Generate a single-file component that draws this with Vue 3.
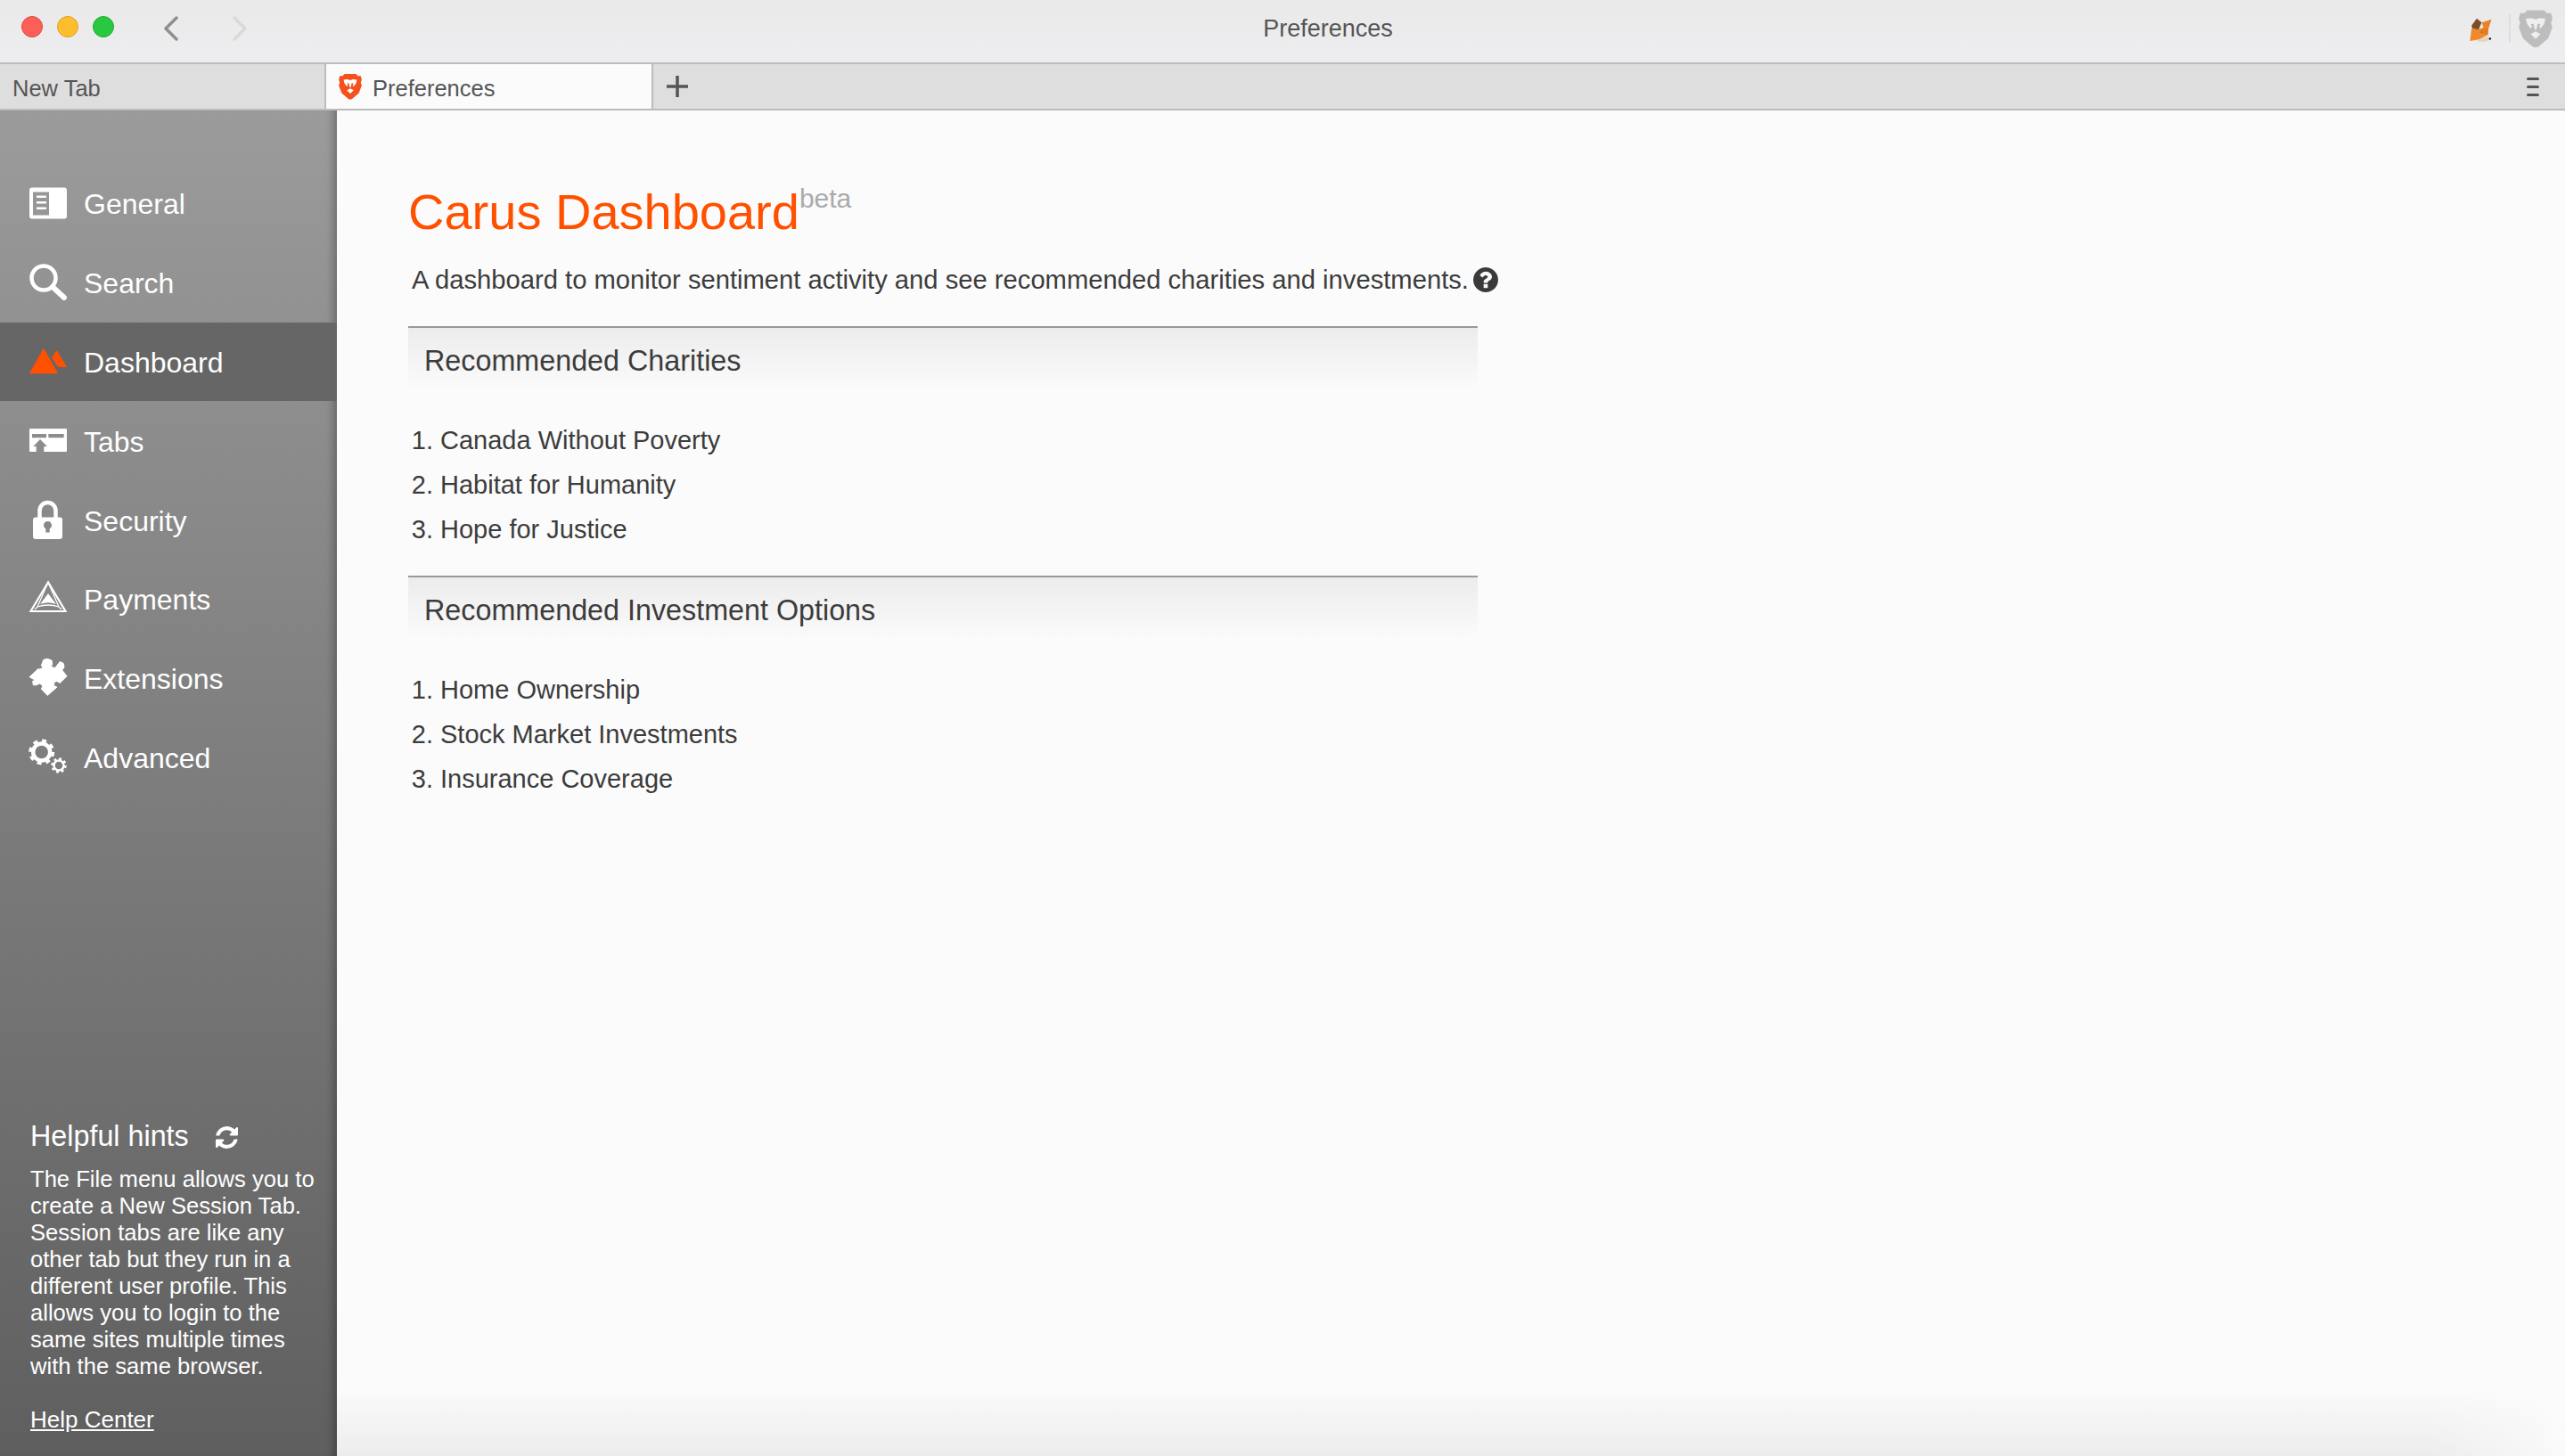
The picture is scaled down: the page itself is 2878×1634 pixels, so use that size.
<script setup>
const charities = ['Canada Without Poverty', 'Habitat for Humanity', 'Hope for Justice']
const investments = ['Home Ownership', 'Stock Market Investments', 'Insurance Coverage']
const shield = 'M6 1 L18 1 L20 3 L23 3 L24 7 L23 10 L24 13 L21 21 L14 27 Q12 28 10 27 L3 21 L0 13 L1 10 L0 7 L1 3 L4 3 Z'
const mane = 'M5 7 L9 6.5 L12 7.5 L15 6.5 L19 7 L18 11 L15.5 14 L14.5 12.5 L15.5 11 L13.5 10.5 L12.5 15 L11.5 15 L10.5 10.5 L8.5 11 L9.5 12.5 L8.5 14 L6 11 Z'
const chin = 'M12 16 L15.5 18 L12 21.5 L8.5 18 Z'
</script>

<template>
  <div class="window">
    <header class="titlebar">
      <div class="controls">
        <span class="light red"></span>
        <span class="light amber"></span>
        <span class="light green"></span>
        <svg class="chev back" viewBox="0 0 16 28"><path d="M14 2 L2 14 L14 26" /></svg>
        <svg class="chev forward" viewBox="0 0 16 28"><path d="M2 2 L14 14 L2 26" /></svg>
      </div>
      <div class="wintitle">Preferences</div>
      <div class="extras">
        <svg class="fox" viewBox="0 0 70 78">
          <polygon points="38,15 70,5 60,35 45,35" fill="#e8832a" />
          <polygon points="5,35 28,38 45,32 60,35 58,55 45,62 30,70 0,75" fill="#f0892c" />
          <polygon points="28,38 45,32 60,35 58,55 42,52" fill="#e57d1f" />
          <polygon points="5,25 22,2 38,15 28,38 8,35" fill="#7f4d25" />
          <polygon points="30,70 58,60 70,68 50,78 20,76" fill="#e4d3c2" />
          <circle cx="65" cy="68" r="3.5" fill="#222" />
          <circle cx="38" cy="47" r="2" fill="#555" />
        </svg>
        <span class="extra-sep"></span>
        <svg class="brave-gray" viewBox="0 0 24 28">
          <path :d="shield" fill="#bdbdbd" />
          <path :d="mane" fill="#efefef" />
          <path :d="chin" fill="#efefef" />
        </svg>
      </div>
    </header>

    <nav class="tabstrip">
      <div class="tab">New Tab</div>
      <div class="tab active">
        <svg class="favicon" viewBox="0 0 24 28">
          <path :d="shield" fill="#f4511e" />
          <path :d="mane" fill="#fff" />
          <path :d="chin" fill="#fff" />
        </svg>
        <span>Preferences</span>
      </div>
      <svg class="plus" viewBox="0 0 24 24"><path d="M12 0 V24 M0 12 H24" /></svg>
      <div class="burger"><i></i><i></i><i></i></div>
    </nav>

    <div class="body">
      <aside class="sidebar">
        <ul class="nav">
          <li class="nav-item">
            <svg viewBox="0 0 44 44"><path fill="#fff" fill-rule="evenodd" d="M4 4.500 H40 a3 3 0 0 1 3 3 V36.500 a3 3 0 0 1 -3 3 H4 a3 3 0 0 1 -3 -3 V7.500 a3 3 0 0 1 3 -3 Z M5 9.500 V35.500 H23 V9.500 Z M9 13.500 H20 V16 H9 Z M9 20 H20 V22.500 H9 Z M9 26.500 H20 V29 H9 Z" /></svg>
            <span>General</span>
          </li>
          <li class="nav-item">
            <svg viewBox="0 0 44 44"><circle cx="17" cy="17" r="13.500" fill="none" stroke="#fff" stroke-width="4.500" /><path d="M27 27 L40 39" stroke="#fff" stroke-width="6" stroke-linecap="round" /></svg>
            <span>Search</span>
          </li>
          <li class="nav-item current">
            <svg viewBox="0 0 44 44"><path fill="#ff5000" stroke="#ff5000" stroke-width="1.500" stroke-linejoin="round" d="M17 8 L2 34.500 H32 Z" /><path fill="#ff5000" stroke="#ff5000" stroke-width="1" stroke-linejoin="round" d="M31.500 9.500 L42.500 27.500 H33.500 L26.500 17.500 Z" /></svg>
            <span>Dashboard</span>
          </li>
          <li class="nav-item">
            <svg viewBox="0 0 44 44"><path fill="#fff" fill-rule="evenodd" d="M2 8 H42 a1 1 0 0 1 1 1 V33 a1 1 0 0 1 -1 1 H17.300 V28 H21 L13 20 L5.300 28 H8.700 V34 H2 a1 1 0 0 1 -1 -1 V9 a1 1 0 0 1 1 -1 Z M4 14 V18.200 H20 V14 Z M22.300 14 V18.200 H39.700 V14 Z" /></svg>
            <span>Tabs</span>
          </li>
          <li class="nav-item">
            <svg viewBox="0 0 44 44"><path d="M12.500 20 V11 a9 9 0 0 1 18 0 V20" fill="none" stroke="#fff" stroke-width="4.500" /><path fill="#fff" fill-rule="evenodd" d="M8 18.400 H35 a3 3 0 0 1 3 3 V40 a3 3 0 0 1 -3 3 H8 a3 3 0 0 1 -3 -3 V21.400 a3 3 0 0 1 3 -3 Z M21.500 23 a4.500 4.500 0 0 0 -2.200 8.400 V35.500 H23.700 V31.400 A4.500 4.500 0 0 0 21.500 23 Z" /></svg>
            <span>Security</span>
          </li>
          <li class="nav-item">
            <svg viewBox="0 0 44 44"><path d="M22 3.500 L2.500 36 H41.500 Z" fill="none" stroke="#fff" stroke-width="2.200" /><path d="M22 3.500 L10 31 M22 3.500 L34 31 M7 34 L10 31 Q22 27 34 31 L37 34" fill="none" stroke="#fff" stroke-width="1.300" /><path fill="#fff" d="M22 16 L31 28 Q22 24.500 13 28 Z" /></svg>
            <span>Payments</span>
          </li>
          <li class="nav-item">
            <svg viewBox="0 0 44 44"><polygon fill="#fff" stroke="#fff" stroke-width="1" stroke-linejoin="round" points="15.300,5.500 16.700,1.500 21,0.300 26,2.100 26.700,6.500 25.300,8.800 29.300,10.800 31.700,8.100 35.300,3.500 39.300,5.500 40,9.800 37.700,13.100 43,19.800 35.300,27.500 32,25.500 28.700,26.500 28.700,30.800 32,32.100 21.300,41.500 14.300,34.100 16,30.800 12.700,28.100 8.700,29.800 5.300,29.800 4.700,25.500 7.300,24.100 1,20.800 11,11.500 12.700,12.100 16,10.500 14.300,7.500" /></svg>
            <span>Extensions</span>
          </li>
          <li class="nav-item">
            <svg viewBox="0 0 44 44">
              <g fill="none" stroke="#fff">
                <circle cx="14.700" cy="16" r="9.500" stroke-width="4.500" />
                <circle cx="14.700" cy="16" r="12.500" stroke-width="4" stroke-dasharray="4.910 4.910" />
                <circle cx="34" cy="31" r="5.500" stroke-width="2.500" />
                <circle cx="34" cy="31" r="7.400" stroke-width="2.600" stroke-dasharray="2.900 2.900" />
              </g>
            </svg>
            <span>Advanced</span>
          </li>
        </ul>

        <section class="hints">
          <h3 class="hints-title">
            <span>Helpful hints</span>
            <svg class="refresh" viewBox="128 128 1536 1536"><path fill="#fff" d="M1639 1056q0 5-1 7-64 268-268 434.500t-478 166.500q-146 0-282.500-55t-243.500-157l-129 129q-19 19-45 19t-45-19-19-45v-448q0-26 19-45t45-19h448q26 0 45 19t19 45-19 45l-137 137q71 66 161 102t187 36q134 0 250-65t186-179q11-17 53-117 8-23 30-23h192q13 0 22.500 9.500t9.500 22.500zm25-800v448q0 26-19 45t-45 19h-448q-26 0-45-19t-19-45 19-45l138-138q-148-137-349-137-134 0-250 65t-186 179q-11 17-53 117-8 23-30 23h-199q-13 0-22.500-9.500t-9.500-22.500v-7q65-268 270-434.500t480-166.500q146 0 284 55.500t245 156.500l130-129q19-19 45-19t45 19 19 45z" /></svg>
          </h3>
          <p class="hints-text">The File menu allows you to create a New Session Tab. Session tabs are like any other tab but they run in a different user profile. This allows you to login to the same sites multiple times with the same browser.</p>
          <a class="help-link">Help Center</a>
        </section>
      </aside>

      <main class="content">
        <h1 class="page-title">Carus Dashboard<sup>beta</sup></h1>
        <p class="desc">
          <span>A dashboard to monitor sentiment activity and see recommended charities and investments.</span>
          <svg class="info" viewBox="128 128 1536 1536"><path fill="#3a3a3a" d="M1024 1376v-192q0-14-9-23t-23-9h-192q-14 0-23 9t-9 23v192q0 14 9 23t23 9h192q14 0 23-9t9-23zm256-672q0-88-55.500-163t-138.500-116-170-41q-243 0-371 213-15 24 8 42l132 100q7 6 19 6 16 0 25-12 53-68 86-92 34-24 86-24 48 0 85.500 26t37.500 59q0 38-20 61t-68 45q-63 28-115.500 86.500t-52.500 125.500v36q0 14 9 23t23 9h192q14 0 23-9t9-23q0-19 21.500-49.500t54.500-49.500q32-18 49-28.500t46-35 44.500-48 28-60.500 12.500-81zm384 192q0 209-103 385.500t-279.500 279.500-385.500 103-385.500-103-279.500-279.500-103-385.500 103-385.500 279.500-279.500 385.500-103 385.500 103 279.500 279.500 103 385.500z" /></svg>
        </p>

        <section class="block">
          <h2 class="block-head">Recommended Charities</h2>
          <ol class="rank">
            <li v-for="c in charities" :key="c">{{ c }}</li>
          </ol>
        </section>
        <section class="block">
          <h2 class="block-head">Recommended Investment Options</h2>
          <ol class="rank">
            <li v-for="c in investments" :key="c">{{ c }}</li>
          </ol>
        </section>
        <div class="bottom-fade"></div>
      </main>
    </div>
  </div>
</template>

<style scoped>
.window {
  height: 100vh;
  display: flex;
  flex-direction: column;
  overflow: hidden;
  font-family: "Liberation Sans", Arial, sans-serif;
  color: #3c3c3c;
}

.titlebar {
  height: 64px;
  padding-bottom: 6px;
  flex: none;
  display: flex;
  align-items: center;
  border-bottom: 2px solid #bcbcbc;
  box-sizing: content-box;
  background: linear-gradient(#e9e9ea, #eeeef0);
}
.controls {
  width: 300px;
  flex: none;
  display: flex;
  align-items: center;
  padding-left: 24px;
  box-sizing: border-box;
}
.light {
  width: 24px;
  height: 24px;
  border-radius: 50%;
  margin-right: 16px;
  margin-top: -4px;
  box-sizing: border-box;
}
.red { background: #fc5f57; border: 1px solid #e2463f; }
.amber { background: #fdbd2e; border: 1px solid #e1a123; }
.green { background: #28c840; border: 1px solid #1fad2e; }
.chev {
  width: 16px;
  height: 28px;
  fill: none;
  stroke-width: 3.500;
  stroke-linecap: round;
  stroke-linejoin: round;
}
.back { stroke: #8f8f8f; margin-left: 40px; }
.forward { stroke: #d9d9d9; margin-left: 61px; }
.wintitle {
  flex: 1;
  text-align: center;
  font-size: 27px;
  color: #555;
}
.extras {
  width: 198px;
  flex: none;
  display: flex;
  align-items: center;
  box-sizing: border-box;
}
.fox { width: 25px; height: 27px; margin-left: 91px; margin-top: 3px; }
.extra-sep { width: 2px; height: 32px; background: #dedede; margin-left: 19px; }
.brave-gray { width: 38px; height: 44px; margin-left: 9px; }

.tabstrip {
  height: 50px;
  flex: none;
  display: flex;
  align-items: center;
  background: #dedede;
  border-bottom: 2px solid #bcbcbc;
  box-sizing: content-box;
}
.tab {
  width: 366px;
  height: 100%;
  display: flex;
  align-items: center;
  padding-left: 14px;
  padding-top: 4px;
  box-sizing: border-box;
  font-size: 25.500px;
  color: #555;
  border-right: 2px solid #bcbcbc;
}
.tab.active {
  width: 367px;
  background: #fbfbfb;
  padding-left: 14px;
  padding-top: 0;
}
.tab.active span {
  padding-top: 4px;
}
.favicon { width: 26px; height: 30px; margin-right: 12px; }
.plus {
  width: 24px;
  height: 24px;
  margin-left: 15px;
  stroke: #555;
  stroke-width: 3.500;
  fill: none;
}
.burger {
  margin-left: auto;
  margin-right: 29px;
  display: flex;
  flex-direction: column;
  gap: 6px;
}
.burger i {
  display: block;
  width: 14px;
  height: 3px;
  background: #555;
  border-radius: 2px;
}

.body {
  flex: 1;
  min-height: 0;
  display: flex;
}
.sidebar {
  width: 378px;
  flex: none;
  display: flex;
  flex-direction: column;
  background: linear-gradient(#9b9b9b, #5f5f5f);
  box-shadow: inset -10px 0 10px -6px rgba(0, 0, 0, 0.28);
  position: relative;
  color: #fff;
}
.nav {
  list-style: none;
  margin: 0;
  padding: 60px 0 0;
}
.nav-item {
  height: 88.800px;
  display: flex;
  align-items: center;
  gap: 18px;
  padding-left: 32px;
  font-size: 32px;
  position: relative;
}
.nav-item span {
  margin-top: 3px;
}
.nav-item svg {
  width: 44px;
  height: 44px;
  flex: none;
  overflow: visible;
}
.nav-item.current {
  background: #666;
}
.nav-item.current::after {
  content: "";
  position: absolute;
  left: 100%;
  top: 50%;
  margin-top: -12px;
  border-left: 12px solid #666;
  border-top: 12px solid transparent;
  border-bottom: 12px solid transparent;
}
.hints {
  margin-top: auto;
  padding: 0 0 26px 34px;
}
.hints-title {
  margin: 0;
  font-size: 32.300px;
  font-weight: normal;
  line-height: 40px;
  display: flex;
  align-items: center;
}
.refresh {
  width: 25px;
  height: 25px;
  margin-left: 30px;
  margin-top: 2px;
}
.hints-text {
  margin: 13px 0 0;
  font-size: 25.600px;
  line-height: 30px;
  width: 330px;
  color: #fff;
}
.help-link {
  display: inline-block;
  margin-top: 30px;
  font-size: 26px;
  line-height: 30px;
  text-decoration: underline;
}

.content {
  flex: 1;
  min-width: 0;
  padding: 84px 0 0 80px;
  background: #fbfbfb;
  position: relative;
}
.page-title {
  margin: 0;
  font-size: 56px;
  line-height: 60px;
  font-weight: normal;
  color: #ff5000;
}
.page-title sup {
  font-size: 30px;
  line-height: 0;
  color: #aaa;
  vertical-align: 24px;
}
.desc {
  margin: 26px 0 0;
  padding-left: 4px;
  font-size: 29.200px;
  line-height: 40px;
  display: flex;
  align-items: center;
  gap: 5px;
}
.info {
  width: 28px;
  height: 28px;
  flex: none;
}
.block {
  width: 1200px;
  margin-top: 32px;
}
.block + .block {
  margin-top: 27px;
}
.block-head {
  margin: 0;
  height: 72px;
  box-sizing: border-box;
  padding: 17px 0 0 18px;
  border-top: 2px solid #999;
  background: linear-gradient(#ececec, #fbfbfb);
  font-size: 32.300px;
  line-height: 40px;
  font-weight: normal;
  color: #3c3c3c;
}
.rank {
  margin: 31px 0 0;
  padding: 0 0 0 36px;
  font-size: 29px;
  line-height: 50px;
}
.bottom-fade {
  position: absolute;
  left: 0;
  right: 0;
  bottom: 0;
  height: 74px;
  background: linear-gradient(rgba(236, 236, 236, 0), #ececec);
  -webkit-mask-image: linear-gradient(to right, #000 94%, transparent);
  mask-image: linear-gradient(to right, #000 94%, transparent);
  pointer-events: none;
}
</style>
